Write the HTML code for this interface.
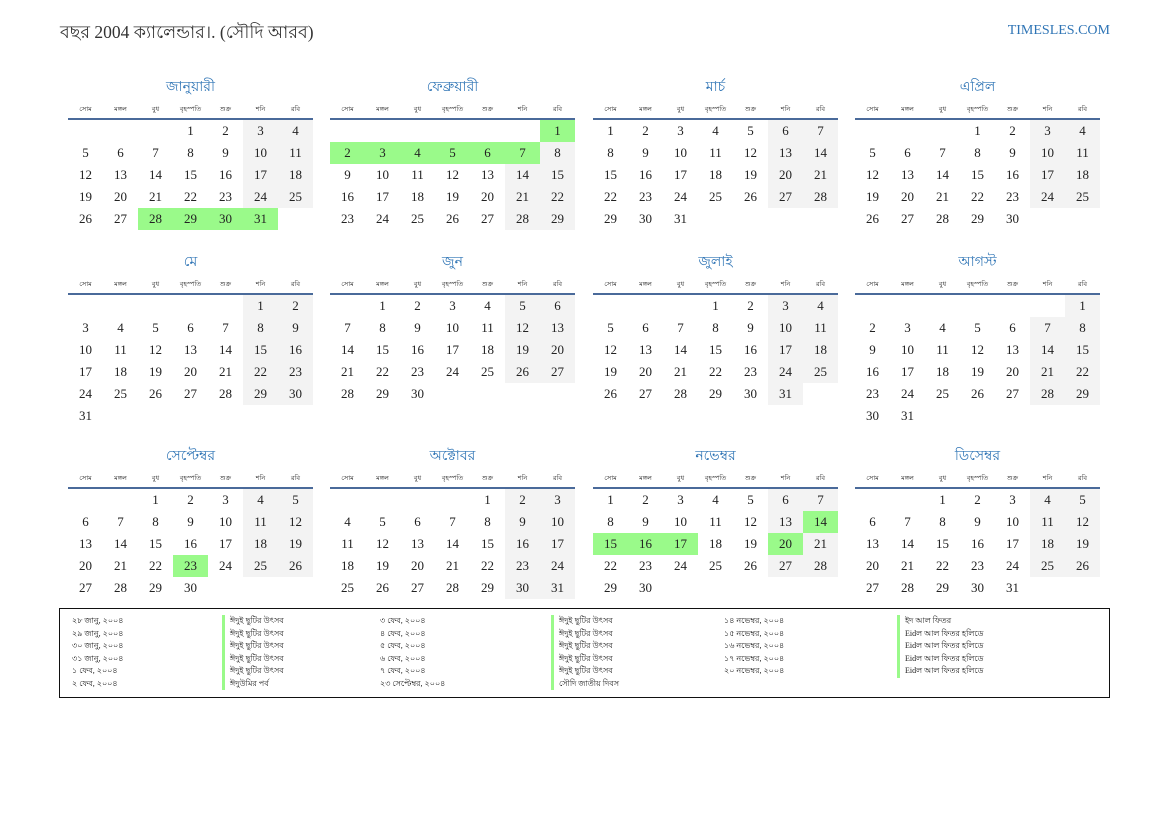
<!DOCTYPE html>
<html><head><meta charset="utf-8">
<style>
body{margin:0;width:1169px;height:827px;background:#fff;position:relative;overflow:hidden;font-family:"Liberation Serif",serif;color:#222}
.a{position:absolute}
.t{left:60px;top:20px;font-size:17.5px;color:#333}
.site{right:59px;top:23px;font-size:14px;color:#2e74b5}
.mt{font-size:14px;color:#2e74b5;text-align:center;width:245px}
.wh{font-size:6.5px;text-align:center;width:35px;color:#222}
.ln{height:2px;background:#4a6a9a;width:245px}
.c{width:35px;height:22px;line-height:22px;text-align:center;font-size:13px}
.w{background:#f3f3f3}
.g{background:#9afa8a}
.leg{left:59px;top:608px;width:1049px;height:88px;border:1.5px solid #111}
.lt{font-size:8px;line-height:12.5px;white-space:nowrap}
.bar{border-left:3px solid #9afa8a;padding-left:5px}
</style></head><body>
<div class="a t">বছর 2004 ক্যালেন্ডার।. (সৌদি আরব)</div>
<div class="a site">TIMESLES.COM</div>
<div id="cal"></div>
<div class="a leg"></div>
<div class="a lt" style="left:72px;top:615px">২৮ জানু, ২০০৪<br>২৯ জানু, ২০০৪<br>৩০ জানু, ২০০৪<br>৩১ জানু, ২০০৪<br>১ ফেব, ২০০৪<br>২ ফেব, ২০০৪</div>
<div class="a lt" style="left:222px;top:615px"><div class="bar">ঈদুই ছুটির উৎসব</div><div class="bar">ঈদুই ছুটির উৎসব</div><div class="bar">ঈদুই ছুটির উৎসব</div><div class="bar">ঈদুই ছুটির উৎসব</div><div class="bar">ঈদুই ছুটির উৎসব</div><div class="bar">ঈদুউমির পর্ব</div></div>
<div class="a lt" style="left:380px;top:615px">৩ ফেব, ২০০৪<br>৪ ফেব, ২০০৪<br>৫ ফেব, ২০০৪<br>৬ ফেব, ২০০৪<br>৭ ফেব, ২০০৪<br>২৩ সেপ্টেম্বর, ২০০৪</div>
<div class="a lt" style="left:551px;top:615px"><div class="bar">ঈদুই ছুটির উৎসব</div><div class="bar">ঈদুই ছুটির উৎসব</div><div class="bar">ঈদুই ছুটির উৎসব</div><div class="bar">ঈদুই ছুটির উৎসব</div><div class="bar">ঈদুই ছুটির উৎসব</div><div class="bar">সৌদি জাতীয় দিবস</div></div>
<div class="a lt" style="left:724px;top:615px">১৪ নভেম্বর, ২০০৪<br>১৫ নভেম্বর, ২০০৪<br>১৬ নভেম্বর, ২০০৪<br>১৭ নভেম্বর, ২০০৪<br>২০ নভেম্বর, ২০০৪</div>
<div class="a lt" style="left:897px;top:615px"><div class="bar">ইদ আল ফিতর</div><div class="bar">Eidল আল ফিতর হলিডে</div><div class="bar">Eidল আল ফিতর হলিডে</div><div class="bar">Eidল আল ফিতর হলিডে</div><div class="bar">Eidল আল ফিতর হলিডে</div></div>
<script>
var names=["জানুয়ারী","ফেব্রুয়ারী","মার্চ","এপ্রিল","মে","জুন","জুলাই","আগস্ট","সেপ্টেম্বর","অক্টোবর","নভেম্বর","ডিসেম্বর"];
var wd=["সোম","মঙ্গল","বুধ","বৃহস্পতি","শুক্র","শনি","রবি"];
var hl={0:[28,29,30,31],1:[1,2,3,4,5,6,7],8:[23],10:[14,15,16,17,20]};
var xs=[68,330,593,855],ys=[77,252,446];
var h="";
for(var m=0;m<12;m++){
 var x=xs[m%4],y=ys[Math.floor(m/4)];
 h+='<div class="a mt" style="left:'+x+'px;top:'+(y-2)+'px">'+names[m]+'</div>';
 for(var i=0;i<7;i++)h+='<div class="a wh" style="left:'+(x+i*35)+'px;top:'+(y+27)+'px">'+wd[i]+'</div>';
 var ly=y+41;
 h+='<div class="a ln" style="left:'+x+'px;top:'+ly+'px"></div>';
 var first=(new Date(2004,m,1).getDay()+6)%7;
 var n=new Date(2004,m+1,0).getDate();
 for(var d=1;d<=n;d++){
  var p=first+d-1,col=p%7,row=Math.floor(p/7);
  var cls="c";
  if(hl[m]&&hl[m].indexOf(d)>=0)cls+=" g";else if(col>=5)cls+=" w";
  h+='<div class="a '+cls+'" style="left:'+(x+col*35)+'px;top:'+(ly+2+row*22)+'px">'+d+'</div>';
 }
}
document.getElementById("cal").innerHTML=h;
</script>
</body></html>
